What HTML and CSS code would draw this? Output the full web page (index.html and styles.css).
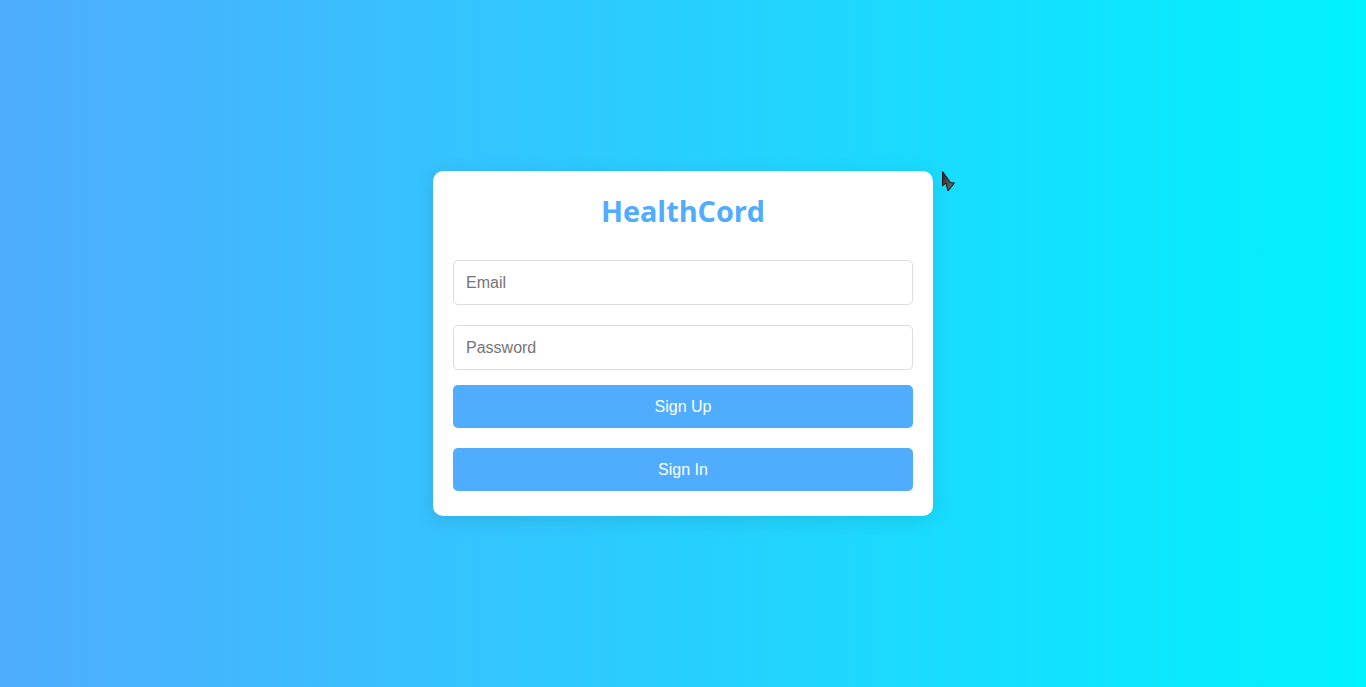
FILE: index.html
```html
<!DOCTYPE html>
<html lang="en">
<head>
<meta charset="utf-8">
<title>HealthCord</title>
<link rel="stylesheet" href="styles.css">
</head>
<body>
<main class="page">
  <form class="card">
    <h2 class="title">HealthCord</h2>
    <input class="field field-email" type="email" placeholder="Email">
    <input class="field field-password" type="password" placeholder="Password">
    <button class="btn btn-up" type="button">Sign Up</button>
    <button class="btn" type="button">Sign In</button>
  </form>
  <svg class="cursor" width="16" height="24" viewBox="0 0 16 24">
    <defs>
      <linearGradient id="cg" x1="0" y1="0" x2="1" y2="1">
        <stop offset="0" stop-color="#222"/>
        <stop offset="1" stop-color="#777"/>
      </linearGradient>
    </defs>
    <path d="M1.5 1.5 L1.5 16 L5 13 L7 21 L13.5 13 L9.5 12.5 Z" fill="url(#cg)" stroke="#111" stroke-width="1" stroke-linejoin="round"/>
  </svg>
</main>
</body>
</html>
```
FILE: styles.css
```css
html, body {
  margin: 0;
  padding: 0;
  height: 100%;
}
body {
  font-family: "Liberation Sans", Arial, sans-serif;
  background: linear-gradient(to right, #4facfe 0%, #00f2fe 100%);
}
.page {
  position: relative;
  height: 100vh;
  display: flex;
  align-items: center;
  justify-content: center;
}
.card {
  width: 500px;
  box-sizing: border-box;
  background: #fff;
  border-radius: 10px;
  padding: 20px 20px 25px;
  box-shadow: 0 4px 20px rgba(0, 0, 0, 0.1);
  display: flex;
  flex-direction: column;
}
.title {
  margin: 0 0 30px;
  text-align: center;
  font-family: "Open Sans", sans-serif;
  font-weight: 700;
  font-size: 28.8px;
  line-height: 39px;
  color: #4facfe;
}
.field {
  box-sizing: border-box;
  height: 45px;
  padding: 1px 12px 0;
  border: 1px solid #ddd;
  border-radius: 5px;
  font-family: "Liberation Sans", Arial, sans-serif;
  font-size: 16px;
  color: #333;
  outline: none;
}
.field::placeholder {
  color: #757575;
}
.field-email {
  margin-bottom: 20px;
}
.field-password {
  margin-bottom: 15px;
}
.btn {
  height: 43px;
  padding: 1px 0 0;
  border: none;
  border-radius: 5px;
  background: #4facfe;
  color: #fff;
  font-family: "Liberation Sans", Arial, sans-serif;
  font-size: 16px;
  cursor: pointer;
}
.btn-up {
  margin-bottom: 20px;
}
.cursor {
  position: absolute;
  left: 941px;
  top: 170px;
}
```
